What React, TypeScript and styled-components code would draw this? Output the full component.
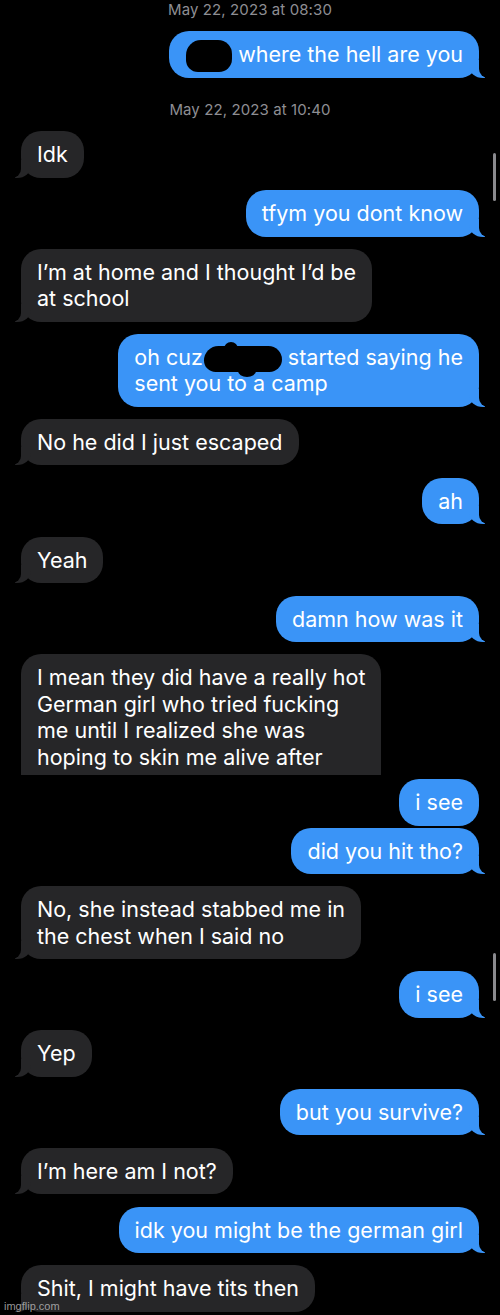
import React from "react";
import styled, { createGlobalStyle, css } from "styled-components";

const Global = createGlobalStyle`
  html, body { margin: 0; padding: 0; background: #000; }
  body { font-family: Inter, "Noto Sans", sans-serif; -webkit-font-smoothing: antialiased; }
`;

const BLUE = "#3a94f7";
const GREY = "#262628";

const Screen = styled.div`
  position: relative;
  width: 500px;
  height: 1315px;
  overflow: hidden;
  background: #000;
  display: flex;
  flex-direction: column;
`;

const Stamp = styled.div<{ $gap: number }>`
  margin-top: ${p => p.$gap}px;
  text-align: center;
  font-size: 15px;
  line-height: 18px;
  color: #8e8e93;
  letter-spacing: 0.1px;
`;

const Row = styled.div<{ $me: boolean; $gap: number }>`
  display: flex;
  justify-content: ${p => (p.$me ? "flex-end" : "flex-start")};
  padding: 0 21px;
  margin-top: ${p => p.$gap}px;
`;

const meTail = css`
  &::before {
    content: "";
    position: absolute;
    bottom: 0;
    right: -6px;
    width: 16px;
    height: 18px;
    background: ${BLUE};
    border-bottom-left-radius: 14px 12px;
  }
  &::after {
    content: "";
    position: absolute;
    bottom: 0;
    right: -10px;
    width: 10px;
    height: 18px;
    background: #000;
    border-bottom-left-radius: 9px;
  }
`;

const themTail = css`
  &::before {
    content: "";
    position: absolute;
    bottom: 0;
    left: -6px;
    width: 16px;
    height: 18px;
    background: ${GREY};
    border-bottom-right-radius: 14px 12px;
  }
  &::after {
    content: "";
    position: absolute;
    bottom: 0;
    left: -10px;
    width: 10px;
    height: 18px;
    background: #000;
    border-bottom-right-radius: 9px;
  }
`;

const Bubble = styled.div<{ $me: boolean; $tail: boolean; $cut?: number }>`
  position: relative;
  padding: 10px 16px;
  border-radius: 20px;
  font-size: 21.5px;
  line-height: 26.5px;
  color: #fff;
  white-space: nowrap;
  background: ${p => (p.$me ? BLUE : GREY)};
  ${p => p.$tail && (p.$me ? meTail : themTail)}
  ${p =>
    p.$cut &&
    css`
      height: ${p.$cut}px;
      box-sizing: border-box;
      padding-bottom: 0;
      overflow: hidden;
      border-bottom-left-radius: 0;
      border-bottom-right-radius: 0;
    `}
`;

const Line = styled.div`
  position: relative;
`;

// marker scribble over names
const Blot = styled.span<{ $w: number; $h: number; $bump?: boolean }>`
  display: inline-block;
  position: relative;
  vertical-align: middle;
  width: ${p => p.$w}px;
  height: ${p => p.$h}px;
  margin: -8px 0 -8px 1px;
  background: #000;
  border-radius: 15px 14px 13px 12px;
  ${p =>
    p.$bump &&
    css`
      &::before {
        content: "";
        position: absolute;
        left: 20px;
        top: -4px;
        width: 14px;
        height: 14px;
        border-radius: 50%;
        background: #000;
      }
      &::after {
        content: "";
        position: absolute;
        left: 34px;
        bottom: -5px;
        width: 18px;
        height: 12px;
        border-radius: 50%;
        background: #000;
      }
    `}
`;

const Scroller = styled.div<{ $top: number }>`
  position: absolute;
  right: 4px;
  top: ${p => p.$top}px;
  width: 3px;
  height: 48px;
  border-radius: 2px;
  background: #8a8a8e;
`;

const Watermark = styled.div`
  position: absolute;
  left: 4px;
  bottom: 3px;
  font-family: "Liberation Sans", Arial, sans-serif;
  font-size: 11px;
  line-height: 12px;
  color: rgba(200, 200, 200, 0.75);
`;

type Msg = {
  me: boolean;
  lines: React.ReactNode[];
  gap: number;
  tail?: boolean;
  cut?: number;
};

const thread: Msg[] = [
  { me: false, lines: ["Idk"], gap: 12 },
  { me: true, lines: ["tfym you dont know"], gap: 12.5 },
  { me: false, lines: ["I’m at home and I thought I’d be", "at school"], gap: 12 },
  {
    me: true,
    lines: [
      <>
        oh cuz<Blot $w={78} $h={26} $bump /> started saying he
      </>,
      "sent you to a camp",
    ],
    gap: 12,
  },
  { me: false, lines: ["No he did I just escaped"], gap: 12 },
  { me: true, lines: ["ah"], gap: 12.5 },
  { me: false, lines: ["Yeah"], gap: 12.5 },
  { me: true, lines: ["damn how was it"], gap: 12.5 },
  {
    me: false,
    lines: [
      "I mean they did have a really hot",
      "German girl who tried fucking",
      "me until I realized she was",
      "hoping to skin me alive after",
    ],
    gap: 12,
    tail: false,
    cut: 121,
  },
  { me: true, lines: ["i see"], gap: 4, tail: false },
  { me: true, lines: ["did you hit tho?"], gap: 2 },
  { me: false, lines: ["No, she instead stabbed me in", "the chest when I said no"], gap: 12 },
  { me: true, lines: ["i see"], gap: 12 },
  { me: false, lines: ["Yep"], gap: 12.5 },
  { me: true, lines: ["but you survive?"], gap: 12 },
  { me: false, lines: ["I’m here am I not?"], gap: 12.5 },
  { me: true, lines: ["idk you might be the german girl"], gap: 12.5 },
  { me: false, lines: ["Shit, I might have tits then"], gap: 12 },
];

export default function App() {
  return (
    <>
      <Global />
      <Screen>
        <Stamp $gap={1}>May 22, 2023 at 08:30</Stamp>
        <Row $me $gap={12}>
          <Bubble $me $tail>
            <Line>
              <Blot $w={46} $h={32} /> where the hell are you
            </Line>
          </Bubble>
        </Row>
        <Stamp $gap={23.5}>May 22, 2023 at 10:40</Stamp>
        {thread.map((m, i) => (
          <Row key={i} $me={m.me} $gap={m.gap}>
            <Bubble $me={m.me} $tail={m.tail !== false} $cut={m.cut}>
              {m.lines.map((l, j) => (
                <Line key={j}>{l}</Line>
              ))}
            </Bubble>
          </Row>
        ))}
        <Scroller $top={153} />
        <Scroller $top={953} />
        <Watermark>imgflip.com</Watermark>
      </Screen>
    </>
  );
}
